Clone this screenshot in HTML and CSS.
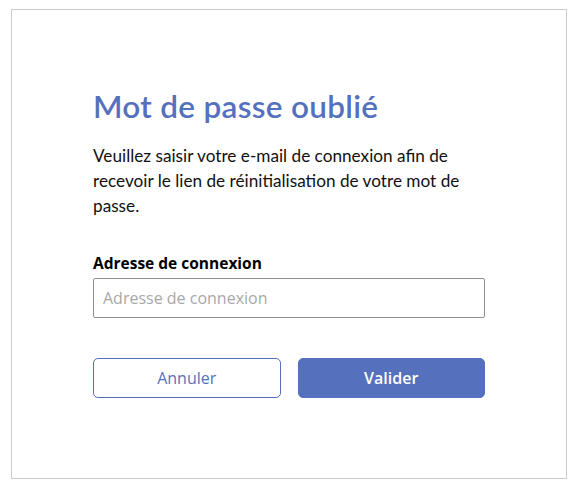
FILE: index.html
```html
<!DOCTYPE html>
<html lang="fr">
<head>
    <meta charset="UTF-8">
    <meta name="viewport" content="width=device-width, initial-scale=1.0">
    <title>Mot de passe oublié</title>
    <link rel="stylesheet" href="styles.css">
</head>
<body>
    <div class="card">
        <h1>Mot de passe oublié</h1>
        <p class="intro">Veuillez saisir votre e-mail de connexion afin de recevoir le lien de réinitialisation de votre mot de passe.</p>
        <div class="form-group">
            <label for="login">Adresse de connexion</label>
            <input type="text" id="login" placeholder="Adresse de connexion">
        </div>
        <div class="actions">
            <button class="btn btn-outline">Annuler</button>
            <button class="btn btn-primary">Valider</button>
        </div>
    </div>
</body>
</html>
```

FILE: styles.css
```css
body {
    margin: 0;
    padding: 9px 0 0 11px;
    font-family: Lato, "Open Sans", sans-serif;
    background: #fff;
}
.card {
    border: 1px solid #cccccc;
    box-sizing: border-box;
    width: 556px;
    height: 470px;
    padding: 77px 81px 0;
}
.card h1 {
    margin: 0 0 18px;
    font-size: 31.5px;
    font-weight: 600;
    color: #5570bd;
    line-height: 38px;
    letter-spacing: 0.3px;
}
.intro {
    margin: 0 0 35px;
    font-size: 17.2px;
    line-height: 25px;
    color: #111;
}
.form-group label {
    display: block;
    font-family: "Open Sans", sans-serif;
    font-size: 15.5px;
    font-weight: bold;
    line-height: 21px;
    color: #000;
    margin-bottom: 4px;
}
.form-group input {
    width: 100%;
    height: 40px;
    box-sizing: border-box;
    border: 1px solid #8f8f8f;
    border-radius: 2px;
    padding: 0 9px;
    font-family: "Open Sans", sans-serif;
    font-size: 16px;
    color: #333;
}
.form-group input::placeholder {
    color: #a8a8a8;
}
.actions {
    display: flex;
    gap: 17px;
    margin-top: 40px;
}
.btn {
    flex: 1;
    height: 40px;
    border-radius: 5px;
    font-family: "Open Sans", sans-serif;
    font-size: 16px;
    border: 1px solid #5570bd;
    cursor: pointer;
}
.btn-outline {
    background: #fff;
    color: #5570bd;
    font-weight: 500;
}
.btn-primary {
    background: #5570bd;
    color: #fff;
    font-weight: 600;
}
```
